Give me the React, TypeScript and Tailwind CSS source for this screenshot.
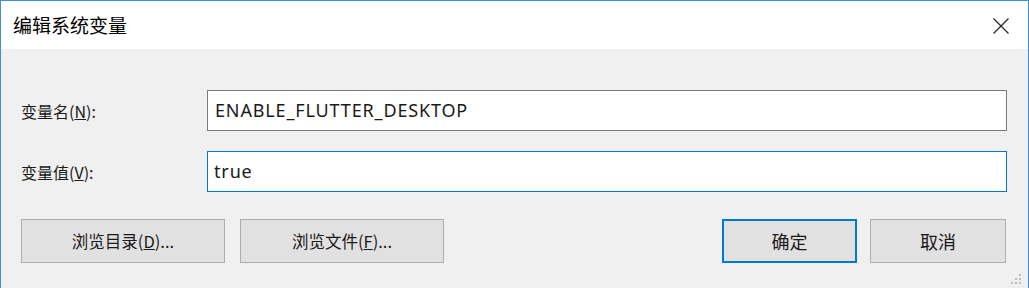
const font = { fontFamily: '"Noto Sans CJK SC", "Noto Sans", sans-serif' };
const latin = { fontFamily: '"Noto Sans", "Noto Sans CJK SC", sans-serif' };

function Btn({ children, primary, className }: { children: React.ReactNode; primary?: boolean; className: string }) {
  return (
    <div
      className={
        'flex h-[44px] items-center justify-center bg-[#e1e1e1] text-[#1a1a1a] ' +
        (primary ? 'border-2 border-[#0078d7] ' : 'border border-[#adadad] ') +
        className
      }
    >
      {children}
    </div>
  );
}

export default function App() {
  return (
    <div className="h-[288px] w-[1029px] overflow-hidden border-x border-t border-[#3f8fd6] bg-[#f0f0f0]" style={font}>
      <div className="flex h-[48px] items-center justify-between bg-white pl-[12px] pr-[19px]">
        <span className="text-[19px] text-black">编辑系统变量</span>
        <svg width="16" height="16" viewBox="0 0 16 16" className="mt-[2px]">
          <path d="M0.5 0.5 L15.5 15.5 M15.5 0.5 L0.5 15.5" stroke="#222" strokeWidth="1.2" />
        </svg>
      </div>

      <div className="flex flex-col gap-[20px] pl-[20px] pr-[20px] pt-[41px]">
        <div className="flex items-center">
          <label className="w-[186px] text-[16px] text-[#1a1a1a]">
            变量名(<span className="underline">N</span>):
          </label>
          <div
            className="flex h-[41px] w-[800px] items-center border border-[#7a7a7a] bg-white pl-[7px] text-[18px] tracking-[0.85px] text-[#1a1a1a]"
            style={latin}
          >
            ENABLE_FLUTTER_DESKTOP
          </div>
        </div>
        <div className="flex items-center">
          <label className="w-[186px] text-[16px] text-[#1a1a1a]">
            变量值(<span className="underline">V</span>):
          </label>
          <div
            className="flex h-[41px] w-[800px] items-center border border-[#0078d7] bg-white pl-[6px] text-[18px] tracking-[0.85px] text-[#1a1a1a]"
            style={latin}
          >
            true
          </div>
        </div>
      </div>

      <div className="relative flex items-center pl-[20px] pt-[27px]">
        <Btn className="w-[204px] text-[16.5px]">
          浏览目录(<span className="underline">D</span>)...
        </Btn>
        <Btn className="ml-[15px] w-[204px] text-[16.5px]">
          浏览文件(<span className="underline">F</span>)...
        </Btn>
        <Btn primary className="ml-[278px] w-[135px] text-[18px]">
          确定
        </Btn>
        <Btn className="ml-[13px] w-[136px] text-[18px]">取消</Btn>
        <svg className="absolute bottom-[-22px] right-[6px]" width="12" height="12" viewBox="0 0 12 12">
          {[
            [9, 1],
            [9, 5],
            [5, 5],
            [9, 9],
            [5, 9],
            [1, 9],
          ].map(([x, y]) => (
            <rect key={`${x}-${y}`} x={x} y={y} width="2" height="2" fill="#bcbcbc" />
          ))}
        </svg>
      </div>
    </div>
  );
}
